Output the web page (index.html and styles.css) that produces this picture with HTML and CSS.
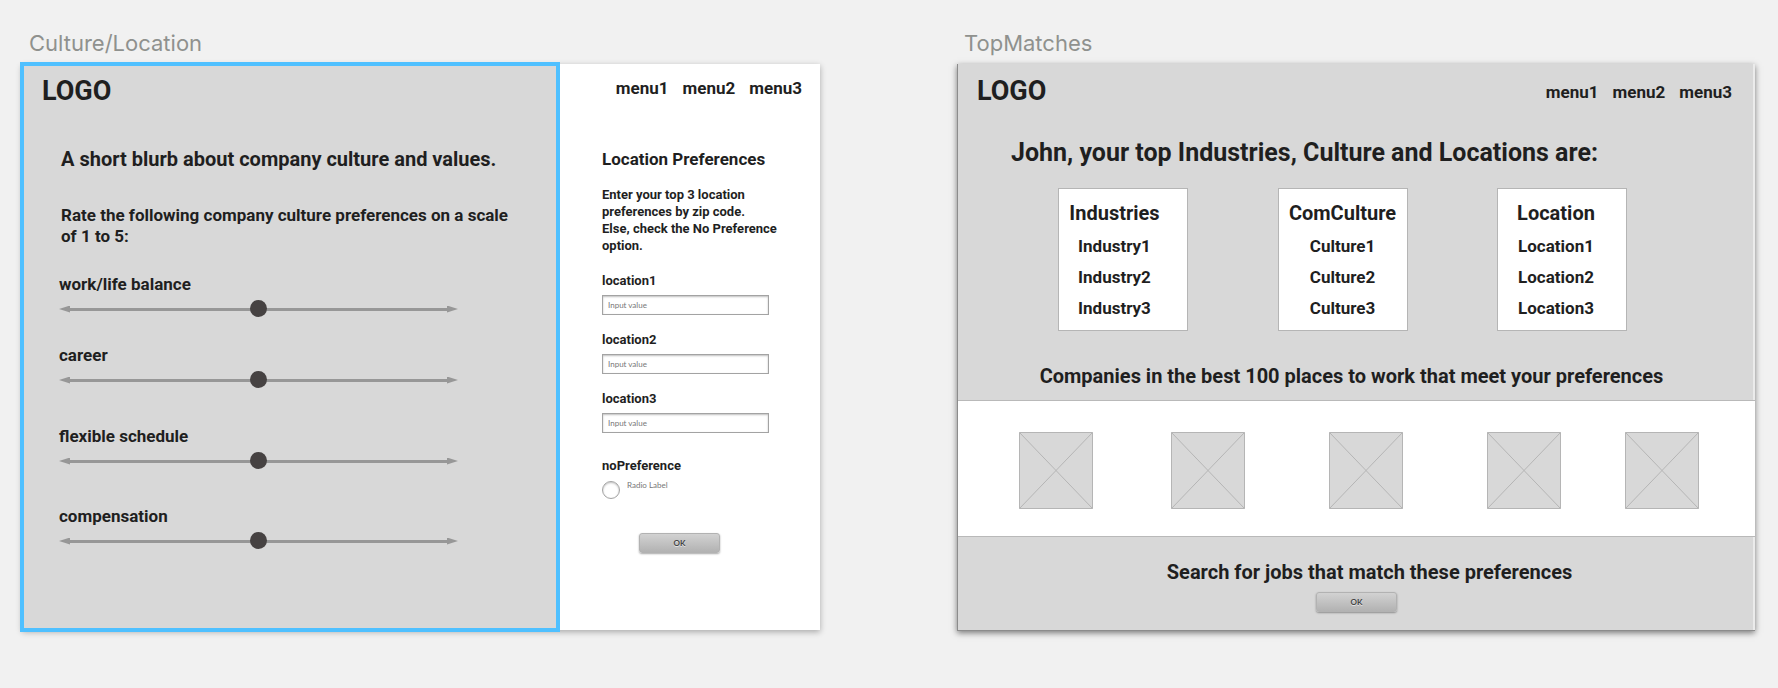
FILE: index.html
```html
<!DOCTYPE html>
<html lang="en">
<head>
<meta charset="utf-8">
<title>Wireframes</title>
<link rel="stylesheet" href="styles.css">
</head>
<body>
<main class="canvas">
  <section class="artboard">
    <h2 class="artboard-name">Culture/Location</h2>
    <div class="board board-split">
      <div class="culture">
        <div class="logo">LOGO</div>
        <div class="culture-body">
          <h3 class="heading">A short blurb about company culture and values.</h3>
          <p class="rate">Rate the following company culture preferences on a scale of 1 to 5:</p>
          <div class="sliders">
            <div class="slider-field">
              <label for="balance">work/life balance</label>
              <span class="slider"><input id="balance" type="range" min="1" max="5" value="3"></span>
            </div>
            <div class="slider-field">
              <label for="career">career</label>
              <span class="slider"><input id="career" type="range" min="1" max="5" value="3"></span>
            </div>
            <div class="slider-field">
              <label for="schedule">flexible schedule</label>
              <span class="slider"><input id="schedule" type="range" min="1" max="5" value="3"></span>
            </div>
            <div class="slider-field">
              <label for="compensation">compensation</label>
              <span class="slider"><input id="compensation" type="range" min="1" max="5" value="3"></span>
            </div>
          </div>
        </div>
      </div>
      <div class="location">
        <nav class="menu">
          <a href="#">menu1</a>
          <a href="#">menu2</a>
          <a href="#">menu3</a>
        </nav>
        <form class="location-form">
          <h3 class="form-title">Location Preferences</h3>
          <p class="form-help">Enter your top 3 location preferences by zip code.<br>Else, check the No Preference option.</p>
          <div class="fields">
            <div class="field">
              <label for="location1">location1</label>
              <input id="location1" class="text-input" type="text" placeholder="Input value">
            </div>
            <div class="field">
              <label for="location2">location2</label>
              <input id="location2" class="text-input" type="text" placeholder="Input value">
            </div>
            <div class="field">
              <label for="location3">location3</label>
              <input id="location3" class="text-input" type="text" placeholder="Input value">
            </div>
          </div>
          <fieldset class="no-preference">
            <legend>noPreference</legend>
            <div class="radio-row">
              <input id="none" class="radio" type="radio" name="none">
              <label for="none">Radio Label</label>
            </div>
          </fieldset>
          <button class="button form-button" type="button">OK</button>
        </form>
      </div>
    </div>
  </section>

  <section class="artboard">
    <h2 class="artboard-name">TopMatches</h2>
    <div class="board board-matches">
      <header class="header">
        <div class="logo">LOGO</div>
        <nav class="menu">
          <a href="#">menu1</a>
          <a href="#">menu2</a>
          <a href="#">menu3</a>
        </nav>
      </header>
      <h3 class="matches-title">John, your top Industries, Culture and Locations are:</h3>
      <div class="cards">
        <div class="card card-industries">
          <h4 class="heading">Industries</h4>
          <ul><li>Industry1</li><li>Industry2</li><li>Industry3</li></ul>
        </div>
        <div class="card">
          <h4 class="heading">ComCulture</h4>
          <ul><li>Culture1</li><li>Culture2</li><li>Culture3</li></ul>
        </div>
        <div class="card card-location">
          <h4 class="heading">Location</h4>
          <ul><li>Location1</li><li>Location2</li><li>Location3</li></ul>
        </div>
      </div>
      <h3 class="heading companies-title">Companies in the best 100 places to work that meet your preferences</h3>
      <div class="companies">
        <svg class="thumb" viewBox="0 0 74 77"><path d="M.5.5h73v76H.5zM.5.5l73 76M73.5.5l-73 76"/></svg>
        <svg class="thumb" viewBox="0 0 74 77"><path d="M.5.5h73v76H.5zM.5.5l73 76M73.5.5l-73 76"/></svg>
        <svg class="thumb" viewBox="0 0 74 77"><path d="M.5.5h73v76H.5zM.5.5l73 76M73.5.5l-73 76"/></svg>
        <svg class="thumb" viewBox="0 0 74 77"><path d="M.5.5h73v76H.5zM.5.5l73 76M73.5.5l-73 76"/></svg>
        <svg class="thumb" viewBox="0 0 74 77"><path d="M.5.5h73v76H.5zM.5.5l73 76M73.5.5l-73 76"/></svg>
      </div>
      <div class="search">
        <h3 class="heading search-title">Search for jobs that match these preferences</h3>
        <button class="button" type="button">OK</button>
      </div>
    </div>
  </section>
</main>
</body>
</html>
```

FILE: styles.css
```css
* {
  box-sizing: border-box;
}

body {
  margin: 0;
  background: #f1f1f1;
  color: #1f1f1f;
  font: bold 17px/20px Roboto, "Liberation Sans", sans-serif;
}

h2, h3, h4, p, ul {
  margin: 0;
  padding: 0;
}

ul {
  list-style: none;
}

/* Canvas and artboards */
.canvas {
  display: grid;
  grid-template-columns: 1fr 1fr;
  gap: 137px;
  padding: 29px 23px 56px 22px;
}

.artboard-name {
  margin: 0 0 7px 7px;
  color: #8f918e;
  font: 400 22px/28px Inter, "Liberation Sans", sans-serif;
}

.board {
  background: #fff;
  box-shadow: 0 2px 6px rgba(0, 0, 0, 0.3);
}

.board-split {
  display: grid;
  grid-template-columns: 536fr 262fr;
}

.logo {
  font-size: 27px;
  line-height: 32px;
}

.heading {
  font-size: 20px;
  line-height: 24px;
}

.menu {
  display: flex;
  justify-content: flex-end;
  gap: 14px;
}

.menu a {
  color: inherit;
  text-decoration: none;
}

/* Culture panel */
.culture {
  padding: 11px 40px 80px 20px;
  background: #d8d8d8;
  outline: 4px solid #4fc0ff;
  outline-offset: -2px;
}

.culture-body {
  padding: 40px 0 0 19px;
}

.rate {
  margin-top: 34px;
  line-height: 21px;
}

.sliders {
  display: grid;
  grid-template-rows: 71px 81px 80px auto;
  margin: 27px 0 0 -2px;
}

.slider-field label {
  display: block;
}

.slider {
  display: flex;
  align-items: center;
  height: 18px;
  margin: 6px 60px 0 0;
}

.slider::before,
.slider::after {
  content: "";
  width: 11px;
  height: 7px;
  background: #979797;
  clip-path: polygon(0 50%, 100% 0, 100% 100%);
}

.slider::after {
  clip-path: polygon(100% 50%, 0 0, 0 100%);
}

.slider input {
  flex: 1;
  min-width: 0;
  height: 18px;
  margin: 0;
  background: transparent;
  appearance: none;
}

.slider input::-webkit-slider-runnable-track {
  height: 3px;
  background: #979797;
}

.slider input::-webkit-slider-thumb {
  width: 17px;
  height: 17px;
  margin-top: -8px;
  border-radius: 50%;
  background: #464242;
  appearance: none;
}

/* Location panel */
.location {
  padding: 14px 18px 77px 44px;
}

.location-form {
  padding-top: 51px;
}

.form-title {
  font-size: 17px;
}

.form-help {
  margin: 17px 0 18px;
  font-size: 13px;
  line-height: 17px;
}

.fields {
  display: grid;
  gap: 16px;
}

.field label,
.no-preference legend {
  display: block;
  margin-bottom: 6px;
  padding: 0;
  font-size: 13px;
  line-height: 17px;
}

.field {
  margin-right: 33px;
}

.text-input {
  display: block;
  width: 100%;
  height: 20px;
  padding: 0 5px;
  border: 1px solid #a3a3a3;
  background: #fff;
  box-shadow: inset 0 1px 2px rgba(0, 0, 0, 0.25);
  font: 8px Lato, sans-serif;
}

.text-input::placeholder {
  color: #777;
}

.no-preference {
  margin: 24px 0 34px;
  padding: 0;
  border: 0;
}

.no-preference legend {
  margin-bottom: 7px;
}

.radio-row {
  display: flex;
  gap: 7px;
  color: #777;
  font: 8px/8px Lato, sans-serif;
}

.radio {
  width: 18px;
  height: 18px;
  margin: 0;
  border: 1px solid #a3a3a3;
  border-radius: 50%;
  box-shadow: inset 0 1px 2px rgba(0, 0, 0, 0.25);
  appearance: none;
}

.button {
  display: block;
  width: 81px;
  height: 20px;
  padding: 0;
  border: 1px solid #b2b2b2;
  border-radius: 3px;
  background: linear-gradient(#d2d2d2, #b2b2b2);
  box-shadow: 0 1px 2px rgba(0, 0, 0, 0.35);
  color: #444;
  font: bold 8px Lato, sans-serif;
  text-shadow: 0 1px 0 #e4e4e4;
}

.form-button {
  margin-left: 37px;
}

/* Top matches board */
.board-matches {
  border: solid #8c8c8c;
  border-width: 0 0 1px 1px;
  background: #d8d8d8;
  box-shadow: 0 2px 6px rgba(0, 0, 0, 0.5), inset -2px 0 #ebebeb;
}

.header {
  display: flex;
  align-items: center;
  justify-content: space-between;
  padding: 11px 23px 0 19px;
}

.header .menu {
  padding-top: 2px;
}

.matches-title {
  margin: 31px 0 20px 53px;
  font-size: 25px;
  line-height: 30px;
}

.cards {
  display: grid;
  grid-template-columns: repeat(3, 130px);
  justify-content: space-between;
  margin: 0 128px 0 100px;
}

.card {
  padding: 12px 0 6px;
  border: 1px solid #b5b5b5;
  background: #fff;
  text-align: center;
}

.card ul {
  margin-top: 6px;
  line-height: 31px;
}

.card-industries {
  padding-right: 17px;
}

.card-location {
  padding-right: 12px;
}

.companies-title {
  margin: 33px 10px 12px 0;
  text-align: center;
}

.companies {
  display: grid;
  grid-template-columns: 152fr 158fr 158fr 138fr 74px;
  padding: 31px 56px 27px 61px;
  border: solid #b9b9b9;
  border-width: 1px 0;
  background: #fff;
}

.thumb {
  display: block;
  width: 74px;
  height: 77px;
  fill: #d8d8d8;
  stroke: #b5b5b5;
}

.search {
  display: grid;
  justify-items: center;
  gap: 8px;
  padding: 23px 0 18px;
}

.search-title {
  padding-left: 26px;
}
```
